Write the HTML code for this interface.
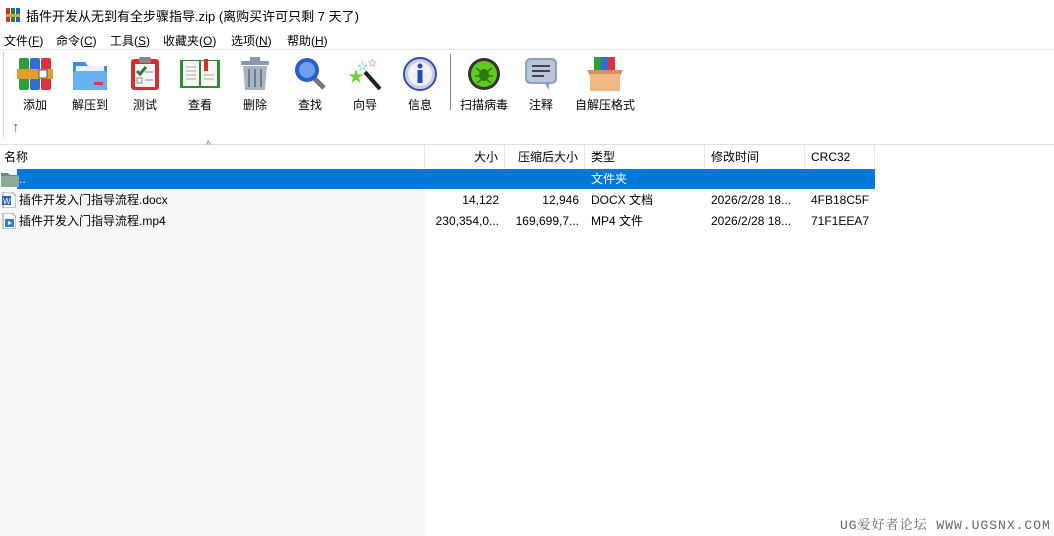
<!DOCTYPE html>
<html><head><meta charset="utf-8"><style>
*{margin:0;padding:0;box-sizing:border-box}
body{width:1054px;height:536px;overflow:hidden;background:#fff;font-family:"Liberation Sans","Noto Sans CJK SC",sans-serif;font-size:12px;color:#000;position:relative}
.a{position:absolute;white-space:nowrap}
.tb{position:absolute;top:56px;width:56px;text-align:center}
.tb .ic{width:36px;height:36px;margin:0 auto;position:relative}
.tb .lb{margin-top:4px;font-size:12px}
.hd{position:absolute;top:145px;height:24px;line-height:24px;border-right:1px solid #e5e5e5;padding:0 6px}
.r{position:absolute;height:21px;line-height:21px;padding:0 6px}
</style></head><body>
<svg class="a" style="left:5px;top:7px" width="16" height="16"><rect x="1" y="1" width="4" height="14" fill="#c0392b"/><rect x="6" y="1" width="4" height="14" fill="#2e7d32"/><rect x="11" y="1" width="4" height="14" fill="#1565c0"/><rect x="1" y="7" width="14" height="3" fill="#d4a040"/></svg>
<div class="a" style="left:26px;top:6px;font-size:13px">插件开发从无到有全步骤指导.zip (离购买许可只剩 7 天了)</div>
<div class="a" style="left:4px;top:32px">文件(<u>F</u>)</div>
<div class="a" style="left:56px;top:32px">命令(<u>C</u>)</div>
<div class="a" style="left:110px;top:32px">工具(<u>S</u>)</div>
<div class="a" style="left:163px;top:32px">收藏夹(<u>O</u>)</div>
<div class="a" style="left:231px;top:32px">选项(<u>N</u>)</div>
<div class="a" style="left:287px;top:32px">帮助(<u>H</u>)</div>
<div class="a" style="left:0;top:49px;width:1054px;border-top:1px solid #e8e8e8"></div>
<div class="a" style="left:3px;top:52px;height:86px;border-left:1px dotted #bbb"></div>

<div class="tb" style="left:7px"><div class="ic"><svg width="36" height="36"><rect x="2" y="2" width="10" height="32" rx="2" fill="#2e9d3a"/><rect x="13" y="2" width="10" height="32" rx="2" fill="#2f6fd0"/><rect x="24" y="2" width="10" height="32" rx="2" fill="#d9333f"/><rect x="0" y="13" width="36" height="10" fill="#e0a030"/><rect x="22" y="14" width="8" height="8" fill="#fff" stroke="#555"/></svg></div><div class="lb">添加</div></div>
<div class="tb" style="left:62px"><div class="ic"><svg width="36" height="36"><path d="M1 6h12l3 4h19v24H1z" fill="#3f8ee0"/><rect x="4" y="10" width="28" height="8" fill="#eef"/><rect x="1" y="15" width="34" height="19" rx="3" fill="#69b2f2"/><rect x="22" y="26" width="9" height="3" fill="#e53935"/></svg></div><div class="lb">解压到</div></div>
<div class="tb" style="left:117px"><div class="ic"><svg width="36" height="36"><rect x="4" y="3" width="28" height="31" rx="3" fill="#d32f2f"/><rect x="8" y="8" width="20" height="23" fill="#f7f7f7"/><rect x="12" y="1" width="12" height="6" rx="2" fill="#888"/><path d="M10 15l3 3 6-7" stroke="#2e7d32" stroke-width="3" fill="none"/><rect x="10" y="22" width="5" height="5" fill="none" stroke="#888"/><path d="M18 16h8M18 24h8" stroke="#888"/></svg></div><div class="lb">测试</div></div>
<div class="tb" style="left:172px"><div class="ic"><svg width="42" height="36" style="margin-left:-3px"><rect x="1" y="4" width="40" height="28" fill="#2e8b3a"/><rect x="4" y="5" width="16" height="25" fill="#f7f7ef"/><rect x="22" y="5" width="16" height="25" fill="#f7f7ef"/><rect x="25" y="3" width="4" height="12" fill="#d32f2f"/><path d="M7 11h10M7 15h10M7 19h10M7 23h10M25 19h10M25 23h10" stroke="#aaa"/></svg></div><div class="lb">查看</div></div>
<div class="tb" style="left:227px"><div class="ic"><svg width="36" height="36"><rect x="4" y="5" width="28" height="4" rx="1" fill="#8a9aa8"/><rect x="13" y="1" width="10" height="5" fill="#8a9aa8"/><path d="M6 10h24l-2 24H8z" fill="#a7b5c2"/><path d="M12 13v18M18 13v18M24 13v18" stroke="#6b7b88" stroke-width="2"/></svg></div><div class="lb">删除</div></div>
<div class="tb" style="left:282px"><div class="ic"><svg width="36" height="36"><path d="M22 22l10 10" stroke="#777" stroke-width="5"/><circle cx="15" cy="14" r="12" fill="#2a5fc8"/><circle cx="15" cy="14" r="8" fill="#6da0ee"/></svg></div><div class="lb">查找</div></div>
<div class="tb" style="left:337px"><div class="ic"><svg width="36" height="36"><path d="M18 16l15 17" stroke="#222" stroke-width="4"/><text x="1" y="26" fill="#6ed33c" font-size="16">★</text><text x="10" y="14" fill="#3cc8e0" font-size="11">☆</text><text x="21" y="10" fill="#e06080" font-size="9">☆</text></svg></div><div class="lb">向导</div></div>
<div class="tb" style="left:392px"><div class="ic"><svg width="36" height="36"><circle cx="18" cy="18" r="16" fill="#ccd" stroke="#3050b0" stroke-width="2"/><circle cx="18" cy="18" r="12" fill="#f0f0f8"/><circle cx="18" cy="10" r="2.5" fill="#2848b8"/><rect x="15.5" y="14" width="5" height="13" fill="#2848b8"/></svg></div><div class="lb">信息</div></div>
<div class="a" style="left:450px;top:54px;height:56px;border-left:1px solid #888"></div>
<div class="tb" style="left:456px"><div class="ic"><svg width="36" height="36"><circle cx="18" cy="18" r="16" fill="#333"/><circle cx="18" cy="18" r="13" fill="#5ecb1f"/><ellipse cx="18" cy="19" rx="5" ry="6" fill="#2d7a10"/><path d="M10 12l5 4M26 12l-5 4M9 20h5M27 20h-5M11 27l4-3M25 27l-4-3" stroke="#2d7a10" stroke-width="1.5"/></svg></div><div class="lb">扫描病毒</div></div>
<div class="tb" style="left:513px"><div class="ic"><svg width="36" height="36"><rect x="2" y="2" width="32" height="26" rx="5" fill="#8fa0b8"/><rect x="4" y="4" width="28" height="22" rx="4" fill="#b8c6d8"/><path d="M9 10h18M9 15h18M9 20h12" stroke="#445" stroke-width="2"/><path d="M22 28l4 6v-6z" fill="#8fa0b8"/></svg></div><div class="lb">注释</div></div>
<div class="tb" style="left:570px;width:70px"><div class="ic"><svg width="40" height="36" style="margin-left:-2px"><rect x="9" y="1" width="7" height="14" fill="#2e9d3a"/><rect x="16" y="1" width="7" height="14" fill="#2f6fd0"/><rect x="23" y="1" width="7" height="14" fill="#d9333f"/><path d="M2 14h36l-3 6H5z" fill="#d9905a"/><rect x="5" y="18" width="30" height="17" fill="#f0b884"/></svg></div><div class="lb">自解压格式</div></div>

<div class="a" style="left:12px;top:119px;font-size:15px;color:#666">↑</div>
<div class="a" style="left:0;top:144px;width:1054px;border-top:1px solid #e0e0e0"></div>
<div class="a" style="left:206px;top:140px;font-size:10px;color:#666">^</div>
<div class="a" style="left:0;top:169px;width:425px;height:367px;background:#f7f7f7"></div>
<div class="hd" style="left:0;width:425px;padding-left:4px">名称</div>
<div class="hd" style="left:425px;width:80px;text-align:right">大小</div>
<div class="hd" style="left:505px;width:80px;text-align:right">压缩后大小</div>
<div class="hd" style="left:585px;width:120px">类型</div>
<div class="hd" style="left:705px;width:100px">修改时间</div>
<div class="hd" style="left:805px;width:70px">CRC32</div>

<div class="a" style="left:17px;top:169px;width:858px;height:20px;background:#0078d7"></div>
<svg class="a" style="left:1px;top:171px" width="18" height="16"><path d="M0 2h7l2 2h9v12H0z" fill="#6a8c7a"/><rect x="0" y="5" width="18" height="11" fill="#8fa898"/></svg>
<div class="r a" style="left:13px;top:169px;color:#fff">..</div>
<div class="r a" style="left:585px;top:169px;color:#fff">文件夹</div>

<svg class="a" style="left:2px;top:192px" width="14" height="16"><path d="M1 0h9l4 4v12H1z" fill="#fff" stroke="#999"/><rect x="0" y="4" width="9" height="9" fill="#2b5fb8"/><text x="1" y="12" font-size="8" fill="#fff" font-family="Liberation Sans">W</text></svg>
<div class="r a" style="left:13px;top:190px">插件开发入门指导流程.docx</div>
<div class="r a" style="left:425px;top:190px;width:80px;text-align:right">14,122</div>
<div class="r a" style="left:505px;top:190px;width:80px;text-align:right">12,946</div>
<div class="r a" style="left:585px;top:190px">DOCX 文档</div>
<div class="r a" style="left:705px;top:190px">2026/2/28 18...</div>
<div class="r a" style="left:805px;top:190px">4FB18C5F</div>

<svg class="a" style="left:2px;top:213px" width="14" height="16"><path d="M1 0h9l4 4v12H1z" fill="#fff" stroke="#999"/><rect x="3" y="6" width="9" height="8" fill="#2e7fd0"/><path d="M6 8l4 2-4 2z" fill="#fff"/></svg>
<div class="r a" style="left:13px;top:211px">插件开发入门指导流程.mp4</div>
<div class="r a" style="left:425px;top:211px;width:80px;text-align:right">230,354,0...</div>
<div class="r a" style="left:505px;top:211px;width:80px;text-align:right">169,699,7...</div>
<div class="r a" style="left:585px;top:211px">MP4 文件</div>
<div class="r a" style="left:705px;top:211px">2026/2/28 18...</div>
<div class="r a" style="left:805px;top:211px">71F1EEA7</div>

<div class="a" style="left:840px;top:514px;font-family:'Liberation Mono','Noto Serif CJK SC',monospace;font-size:13px;letter-spacing:1px;color:#666">UG爱好者论坛 WWW.UGSNX.COM</div>
</body></html>
